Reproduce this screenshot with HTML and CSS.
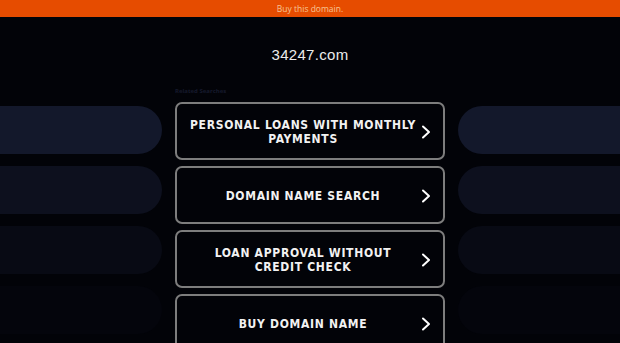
FILE: index.html
```html
<!DOCTYPE html>
<html>
<head>
<meta charset="utf-8">
<link rel="stylesheet" href="styles.css">
</head>
<body>
<div class="topbar">Buy this domain.</div>
<div class="header"><span class="domain">34247.com</span></div>
<div class="main">
  <div class="side left">
    <div class="pill p1"></div>
    <div class="pill p2"></div>
    <div class="pill p3"></div>
    <div class="pill p4"></div>
  </div>
  <div class="center">
    <div class="related">Related Searches</div>
    <a class="btn" href="#"><span class="label">PERSONAL LOANS WITH MONTHLY PAYMENTS</span><svg class="chev" viewBox="0 0 10 14" width="10" height="14"><polyline points="2,1.5 8,7 2,12.5" fill="none" stroke="#fff" stroke-width="2" stroke-linecap="round" stroke-linejoin="round"/></svg></a>
    <a class="btn" href="#"><span class="label">DOMAIN NAME SEARCH</span><svg class="chev" viewBox="0 0 10 14" width="10" height="14"><polyline points="2,1.5 8,7 2,12.5" fill="none" stroke="#fff" stroke-width="2" stroke-linecap="round" stroke-linejoin="round"/></svg></a>
    <a class="btn" href="#"><span class="label">LOAN APPROVAL WITHOUT CREDIT CHECK</span><svg class="chev" viewBox="0 0 10 14" width="10" height="14"><polyline points="2,1.5 8,7 2,12.5" fill="none" stroke="#fff" stroke-width="2" stroke-linecap="round" stroke-linejoin="round"/></svg></a>
    <a class="btn" href="#"><span class="label">BUY DOMAIN NAME</span><svg class="chev" viewBox="0 0 10 14" width="10" height="14"><polyline points="2,1.5 8,7 2,12.5" fill="none" stroke="#fff" stroke-width="2" stroke-linecap="round" stroke-linejoin="round"/></svg></a>
  </div>
  <div class="side right">
    <div class="pill p1"></div>
    <div class="pill p2"></div>
    <div class="pill p3"></div>
    <div class="pill p4"></div>
  </div>
</div>
</body>
</html>
```
FILE: styles.css
```css
html, body {
  margin: 0;
  padding: 0;
  background: #020308;
  height: 100%;
  overflow: hidden;
}
body {
  font-family: "Open Sans", "DejaVu Sans", sans-serif;
}
.topbar {
  height: 17px;
  background: #e64c00;
  color: #f6c594;
  font-size: 8.5px;
  line-height: 17px;
  text-align: center;
}
.header {
  height: 69px;
  display: flex;
  align-items: center;
  justify-content: center;
}
.domain {
  font-family: "Liberation Sans", Arial, sans-serif;
  font-size: 15px;
  color: #ececec;
  letter-spacing: 0.3px;
  margin-top: 5px;
}
.main {
  display: grid;
  grid-template-columns: 1fr 270px 1fr;
  column-gap: 13px;
}
.side {
  padding-top: 20px;
  display: flex;
  flex-direction: column;
  gap: 12px;
}
.pill {
  height: 48px;
}
.left .pill { border-radius: 0 24px 24px 0; }
.right .pill { border-radius: 24px 0 0 24px; }
.p1 { background: #13182b; }
.p2 { background: #0d101e; }
.p3 { background: #080a14; }
.p4 { background: #04050c; }
.center {
  display: flex;
  flex-direction: column;
  gap: 6px;
}
.related {
  height: 10px;
  font-size: 6px;
  line-height: 10px;
  color: #161a2c;
  font-weight: bold;
}
.btn {
  box-sizing: border-box;
  height: 58px;
  border: 2px solid #7d7d7d;
  border-radius: 7px;
  display: flex;
  align-items: center;
  padding: 1px 12px 0 12px;
  text-decoration: none;
  gap: 4px;
}
.label {
  flex: 1;
  text-align: center;
  color: #f2f2f2;
  font-family: "DejaVu Sans Condensed", "DejaVu Sans", sans-serif;
  font-stretch: condensed;
  font-weight: 700;
  font-size: 12px;
  line-height: 14px;
  letter-spacing: 0.7px;
}
.chev {
  flex: none;
  display: block;
}
```
